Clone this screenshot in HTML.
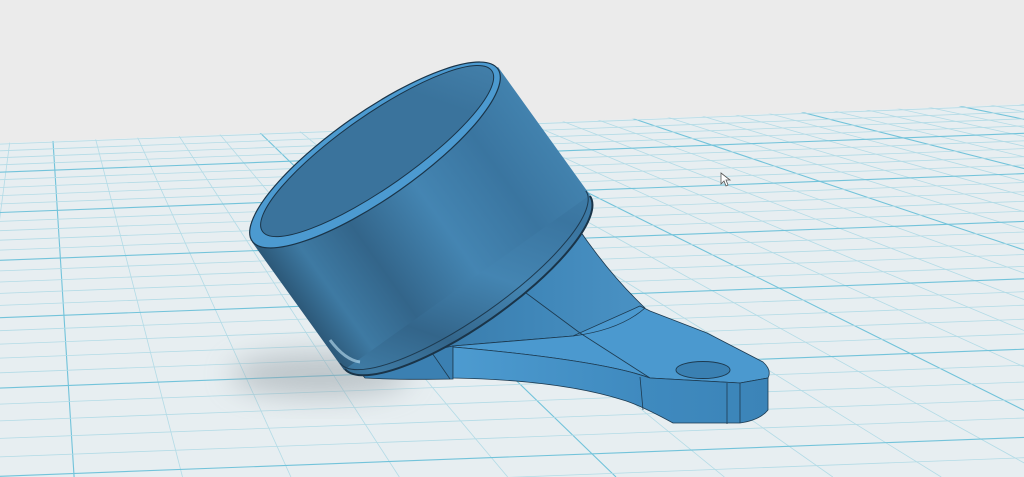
<!DOCTYPE html>
<html><head><meta charset="utf-8"><style>
html,body{margin:0;padding:0;width:1024px;height:477px;overflow:hidden;background:#ebebeb}
svg{display:block;position:absolute;left:0;top:0}
</style></head><body>
<svg id="s" width="1024" height="477" viewBox="0 0 1024 477" xmlns="http://www.w3.org/2000/svg">
<defs>
<clipPath id="floor"><polygon points="0,143 1024,104 1024,477 0,477"/></clipPath>
<filter id="blur" x="-50%" y="-50%" width="200%" height="200%"><feGaussianBlur stdDeviation="14"/></filter>
<linearGradient id="body" gradientUnits="userSpaceOnUse" x1="252" y1="242" x2="498" y2="67">
<stop offset="0" stop-color="#2c5878"/><stop offset="0.12" stop-color="#3e7aa3"/>
<stop offset="0.3" stop-color="#33658a"/><stop offset="0.55" stop-color="#4485b2"/>
<stop offset="0.8" stop-color="#3a75a0"/><stop offset="1" stop-color="#4282ae"/></linearGradient>
<linearGradient id="inner" gradientUnits="userSpaceOnUse" x1="260" y1="240" x2="490" y2="75">
<stop offset="0" stop-color="#3a739c"/><stop offset="0.35" stop-color="#4a8ab6"/>
<stop offset="0.75" stop-color="#33698f"/><stop offset="1" stop-color="#3f7aa3"/></linearGradient>
<linearGradient id="cone" x1="0" y1="0" x2="1" y2="0">
<stop offset="0" stop-color="#3573a0"/><stop offset="0.6" stop-color="#3f86b8"/><stop offset="1" stop-color="#4a92c4"/></linearGradient>
<linearGradient id="side" x1="0" y1="0" x2="1" y2="0">
<stop offset="0" stop-color="#4d9bd0"/><stop offset="0.6" stop-color="#3f8abf"/><stop offset="1" stop-color="#3b84b8"/></linearGradient>
</defs>
<rect width="1024" height="477" fill="#ebebeb"/>
<polygon points="0,143 1024,104 1024,477 0,477" fill="#e7eef1"/>
<g id="grid" clip-path="url(#floor)"></g>
<ellipse cx="320" cy="375" rx="90" ry="22" fill="#9aa3a8" opacity="0.55" filter="url(#blur)"/>
<!-- cone -->
<path d="M520,290 L578,228 Q610,275 645,308 Q620,330 573,336 L453,346 L355,368 Z" fill="url(#cone)" stroke="#1d3a50" stroke-width="0.8"/>
<path d="M522,290 L580,333" stroke="#1d3a50" stroke-width="0.8" fill="none"/>
<!-- base under cup -->
<path d="M355,366 L453,346 L453,379 Q400,380 365,378 Z" fill="#3b80b2" stroke="#1d3a50" stroke-width="0.8"/>
<path d="M430,350 L450,379" stroke="#1d3a50" stroke-width="0.8"/>
<!-- arm top -->
<path d="M453,346 L573,336 L640,306 L650,311 L707,333 L763,362 Q772,370 768,378 L740,383 L650,378 Q600,360 453,347 Z" fill="#4b99cf" stroke="#1d3a50" stroke-width="0.8"/>
<path d="M645,308 Q620,330 573,336" stroke="#1d3a50" stroke-width="0.8" fill="none"/>
<path d="M580,333 L650,378" stroke="#1d3a50" stroke-width="0.8"/>
<!-- arm side -->
<path d="M453,347 Q600,360 650,378 L740,383 L768,378 L768,410 Q760,420 740,423 L673,423 Q640,405 623,400 Q560,380 453,378 Z" fill="url(#side)" stroke="#1d3a50" stroke-width="0.8"/>
<path d="M640,377 L643,410 M727,383 L727,424 M740,383 L740,423" stroke="#1d3a50" stroke-width="0.8"/>
<ellipse cx="703" cy="370" rx="27" ry="8.5" fill="#3a80b2" stroke="#1d3a50" stroke-width="0.9"/>
<!-- cup body -->
<g transform="translate(467,282) rotate(-35)"><ellipse rx="150" ry="44" fill="url(#body)" gradientTransform=""/></g>
<ellipse cx="467" cy="282" rx="150" ry="44" transform="rotate(-35 467 282)" fill="url(#body)"/>
<path d="M0,0" />
<g transform="translate(467,282) rotate(-35)"><path d="M-150,0 A150,44 0 0 0 150,0" fill="none" stroke="#1a3448" stroke-width="2"/></g>
<polygon points="252,242 498,67 590,195 344,370" fill="url(#body)"/>
<g transform="translate(463,277) rotate(-35)"><path d="M-150,0 A150,42 0 0 0 150,0" fill="none" stroke="#1d3a50" stroke-width="1"/></g>
<path d="M330,340 Q345,360 360,362" stroke="#bfe3f5" stroke-width="3" fill="none" opacity="0.6"/>
<!-- rim -->
<g transform="translate(375,155) rotate(-35)">
<ellipse rx="150" ry="43" fill="#4c9ad0" stroke="#1a3448" stroke-width="1.2"/>
<ellipse cx="4" cy="-2" rx="140" ry="36" fill="url(#inner)" stroke="#1a3448" stroke-width="1"/>
</g>
<!-- cursor -->
<path d="M721,173 L721,184 L724,181 L726,186 L728,185 L726,180 L730,180 Z" fill="#fff" stroke="#555" stroke-width="0.8"/>
</svg>
<script>
(function(){
var g=document.getElementById('grid'),h='';
function ln(x1,y1,x2,y2,maj){h+='<line x1="'+x1.toFixed(1)+'" y1="'+y1.toFixed(1)+'" x2="'+x2.toFixed(1)+'" y2="'+y2.toFixed(1)+'" stroke="'+(maj?'#72c3da':'#b3dbe6')+'" stroke-width="'+(maj?1.1:0.8)+'"/>';}
for(var k=-6;k<=30;k++){var f=function(y){return 39+(24+74*k)*(y+81)/381;};ln(f(90),90,f(477),477,k%5==0);}
for(var i=-12;i<40;i++){var m=75.2-4.6-1.095*i;if(m<=0)break;var y0=-308+33900/m;if(y0>520)break;ln(0,y0,1024,y0-0.038*1024,((i%5)+5)%5==0);}
g.innerHTML=h;
})();
</script>
</body></html>
